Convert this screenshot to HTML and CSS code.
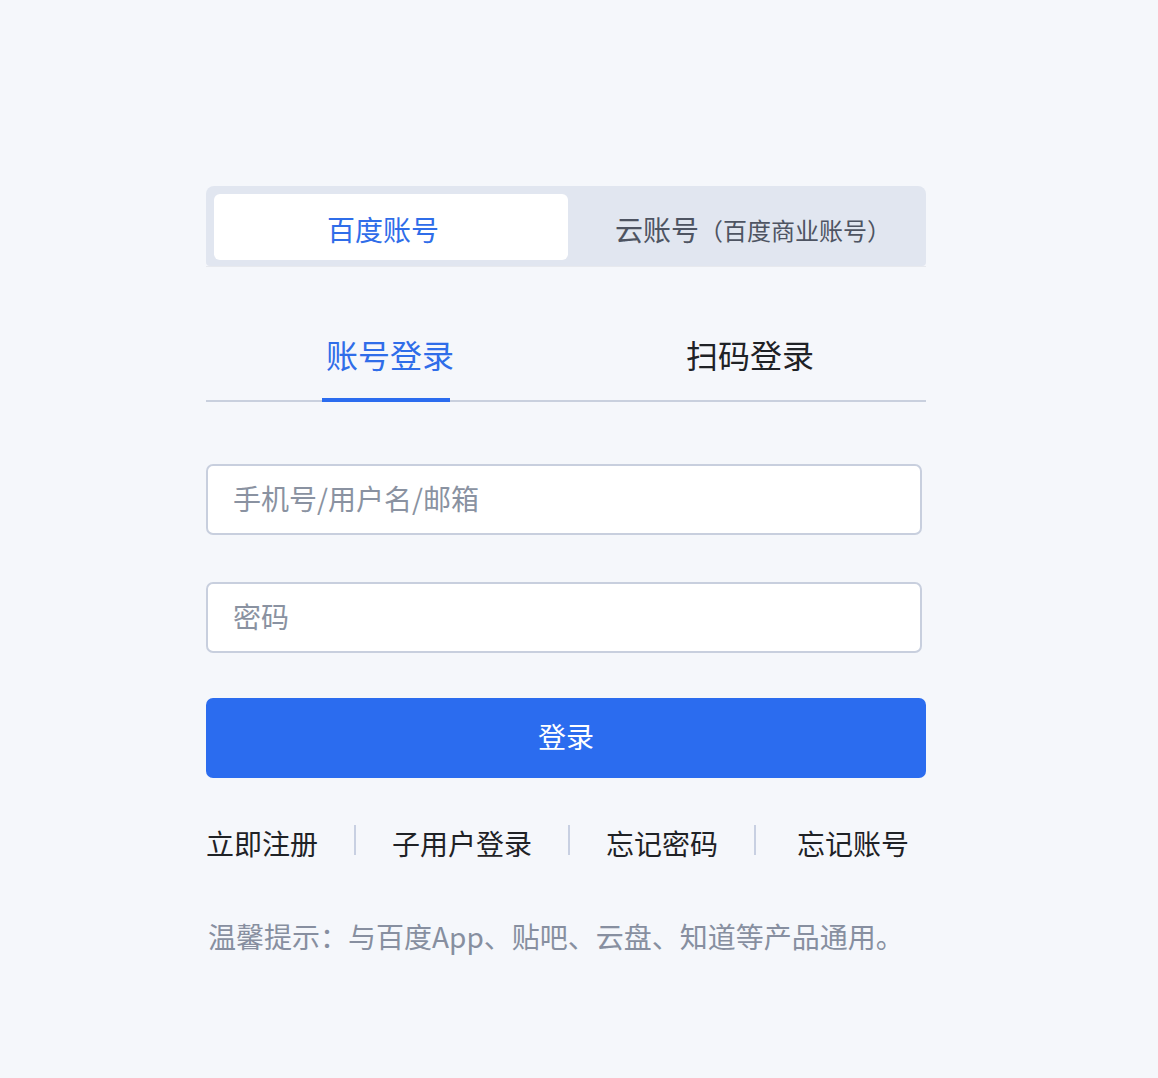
FILE: index.html
```html
<!DOCTYPE html>
<html lang="zh-CN">
<head>
<meta charset="utf-8">
<title>登录</title>
<link rel="stylesheet" href="styles.css">
</head>
<body>
<div class="login">
  <div class="segment">
    <div class="seg-item active">百度账号</div>
    <div class="seg-item">云账号<span class="seg-sub">（百度商业账号）</span></div>
  </div>
  <div class="seg-line"></div>

  <div class="tabs">
    <div class="tab"><span class="tab-label active">账号登录</span></div>
    <div class="tab"><span class="tab-label">扫码登录</span></div>
  </div>

  <form class="form">
    <input class="field" type="text" placeholder="手机号/用户名/邮箱">
    <input class="field" type="password" placeholder="密码">
    <button class="submit" type="button">登录</button>
  </form>

  <div class="links">
    <a class="link">立即注册</a>
    <span class="sep"></span>
    <a class="link">子用户登录</a>
    <span class="sep"></span>
    <a class="link">忘记密码</a>
    <span class="sep sep-last"></span>
    <a class="link">忘记账号</a>
  </div>

  <p class="tip">温馨提示：与百度App、贴吧、云盘、知道等产品通用。</p>
</div>
</body>
</html>
```
FILE: styles.css
```css
* { box-sizing: border-box; }
html, body {
  margin: 0;
  padding: 0;
  background: #f5f7fb;
}
body {
  font-family: "Noto Sans CJK SC", "Noto Sans", "Liberation Sans", sans-serif;
  color: #1f2329;
}
.login {
  width: 720px;
  margin-left: 206px;
  padding-top: 186px;
}
.segment {
  display: flex;
  height: 80px;
  padding: 8px 8px 6px 8px;
  background: #e1e6f0;
  border-radius: 8px 8px 4px 4px;
}
.seg-item {
  flex: 1;
  display: flex;
  align-items: center;
  justify-content: center;
  font-size: 28px;
  color: #4e5462;
  border-radius: 6px;
  padding: 4px 0 0 20px;
}
.seg-item.active {
  flex: 0 0 354px;
  padding: 4px 16px 0 0;
  background: #ffffff;
  color: #2f6de9;
}
.seg-sub {
  font-size: 24px;
}
.seg-line {
  height: 1px;
  background: #e7e9ee;
}
.tabs {
  display: flex;
  margin-top: 43px;
  border-bottom: 2px solid #c9d0de;
}
.tab {
  flex: 1;
  display: flex;
  justify-content: center;
}
.tab-label {
  width: 128px;
  text-align: center;
  text-indent: 4px;
  font-size: 32px;
  line-height: 88px;
  color: #1f2226;
  border-bottom: 4px solid transparent;
  margin-bottom: -2px;
  white-space: nowrap;
}
.tab-label.active {
  color: #2f6de9;
  border-bottom-color: #2b6cef;
}
.form {
  display: flex;
  flex-direction: column;
  margin: 62px 0 0 0;
}
.field {
  width: 716px;
  height: 71px;
  border: 2px solid #c8cfde;
  border-radius: 7px;
  background: #ffffff;
  padding: 0 0 4px 25px;
  font-family: inherit;
  font-size: 28px;
  color: #1f2329;
  outline: none;
  margin-bottom: 47px;
}
.field + .field {
  margin-bottom: 45px;
}
.field::placeholder {
  color: #8a92a1;
}
.submit {
  width: 720px;
  height: 80px;
  border: none;
  border-radius: 7px;
  background: #2b6cef;
  color: #ffffff;
  font-family: inherit;
  font-size: 28px;
  padding: 0 0 4px 0;
}
.links {
  display: flex;
  align-items: flex-start;
  margin-top: 45px;
}
.link {
  font-size: 28px;
  line-height: 40px;
  color: #1f2226;
  white-space: nowrap;
}
.sep {
  width: 2px;
  height: 30px;
  margin: 2px 36px 0 36px;
  background: #c8d0e2;
}
.sep-last {
  margin-right: 41px;
}
.tip {
  margin: 53px 0 0 2px;
  font-size: 28px;
  line-height: 40px;
  color: #878fa0;
  white-space: nowrap;
}
```
